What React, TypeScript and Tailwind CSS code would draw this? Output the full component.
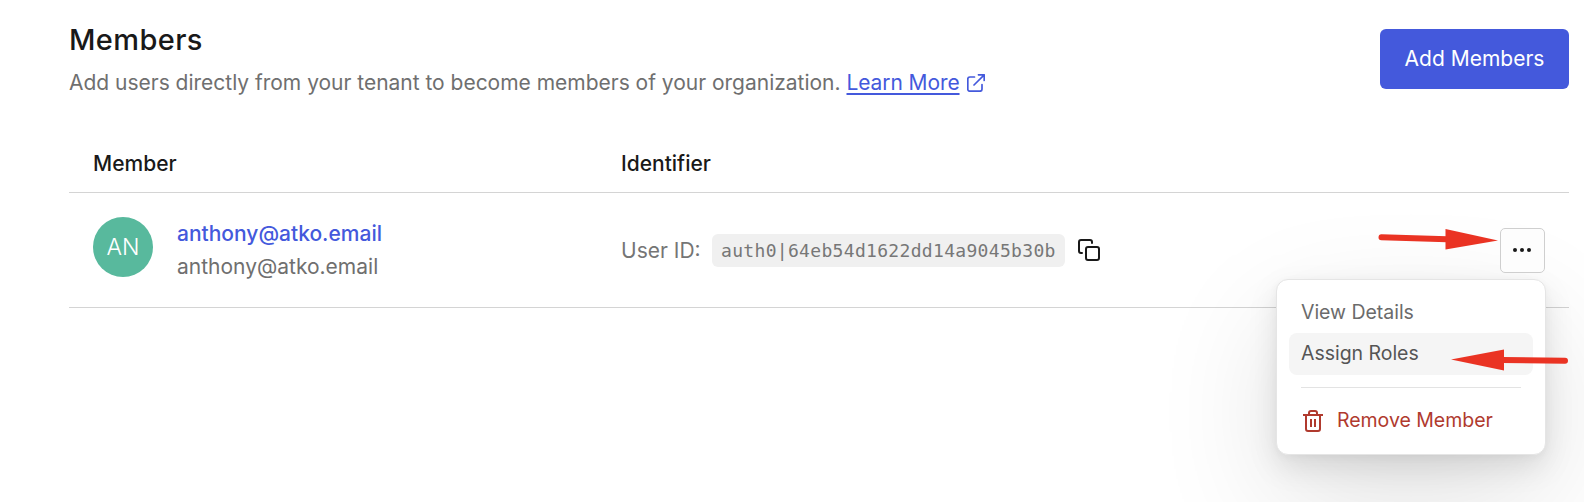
import React from "react";

function ExternalIcon() {
  return (
    <svg className="ml-[7px] h-[18px] w-[18px] text-[#4459dc]" viewBox="0 0 18 18" fill="none" stroke="currentColor" strokeWidth="1.7" strokeLinecap="round" strokeLinejoin="round">
      <path d="M7.5 3H2.8A2 2 0 0 0 .8 5V15.200A2 2 0 0 0 2.8 17.200H13A2 2 0 0 0 15 15.200V10.500M11.500 .8H17.200V6.500M17.200 .8L7 11" />
    </svg>
  );
}

function CopyIcon() {
  return (
    <svg className="ml-[13px] h-[22px] w-[22px] text-[#191919]" viewBox="0 0 22 22" fill="none" stroke="currentColor" strokeWidth="2" strokeLinecap="round">
      <rect x="8" y="8" width="13" height="13" rx="2" />
      <path d="M4 14H3A2 2 0 0 1 1 12V3A2 2 0 0 1 3 1H12A2 2 0 0 1 14 3V4" />
    </svg>
  );
}

function TrashIcon() {
  return (
    <svg className="ml-0.5 h-[22px] w-5" viewBox="0 0 20 22" fill="none" stroke="currentColor" strokeWidth="2" strokeLinejoin="round">
      <path d="M0 5H20M6 5V3A2 2 0 0 1 8 1H12A2 2 0 0 1 14 3V5M3 5V19A2 2 0 0 0 5 21H15A2 2 0 0 0 17 19V5M8 9V17M12 9V17" />
    </svg>
  );
}

function ActionsMenu() {
  return (
    <div className="absolute top-[51px] -right-px h-[176px] w-[270px] rounded-[12px] border border-[#e5e5e5] bg-white px-3 pt-[11px] text-[19.5px] tracking-[-0.03px] shadow-[0_45px_125px_rgba(0,0,0,0.12),0_12px_30px_rgba(0,0,0,0.1),0_2px_8px_rgba(0,0,0,0.04)]">
      <div className="flex h-[42px] items-center px-3 pt-0.5 text-[#6b6b6b]">View Details</div>
      <div className="flex h-[42px] items-center rounded-lg bg-[#f5f5f5] px-3 text-[#555555]">Assign Roles</div>
      <div className="mx-3 mt-3 h-px bg-[#e3e3e3]" />
      <div className="mt-3 flex h-[42px] items-center px-3 text-[#b03a2e]">
        <TrashIcon />
        <span className="ml-[14px] pt-px">Remove Member</span>
      </div>
    </div>
  );
}

function Arrows() {
  return (
    <svg className="pointer-events-none absolute top-[220px] left-[1370px] h-[160px] w-[210px] fill-[#ea3323] stroke-[#ea3323]" viewBox="1370 220 210 160">
      <path d="M1381.500 237.300L1447 239.300" strokeWidth="6" strokeLinecap="round" />
      <path d="M1445.500 229L1498 240.500L1445.500 249.500Z" stroke="none" />
      <path d="M1565 360.700L1502 360" strokeWidth="6" strokeLinecap="round" />
      <path d="M1504 349.500L1451 359.500L1504 370.500Z" stroke="none" />
    </svg>
  );
}

export default function App() {
  return (
    <main className="relative h-[502px] w-[1584px] overflow-hidden bg-white pr-[15px] pl-[69px] font-['Inter',sans-serif]">
      <header className="flex h-[142px] items-start justify-between pt-[24px]">
        <div>
          <h1 className="text-[29px] leading-[32px] font-medium tracking-[0.4px] text-[#191919]">Members</h1>
          <p className="mt-3 flex items-center text-[21px] leading-[30px] tracking-[-0.015px] text-[#6f6f6f]">
            <span>Add users directly from your tenant to become members of your organization.</span>
            <a className="ml-[6px] tracking-[-0.1px] text-[#4459dc] underline decoration-2 underline-offset-[3px]">Learn More</a>
            <ExternalIcon />
          </p>
        </div>
        <button className="mt-[5px] h-[60px] w-[189px] rounded-[6px] bg-[#4459dc] text-[21px] text-white">Add Members</button>
      </header>
      <section className="text-[21px]">
        <div className="flex h-[51px] items-center border-b border-[#d4d4d4] pb-[7px] font-medium text-[#191919]">
          <div className="w-[552px] pl-6">Member</div>
          <div>Identifier</div>
        </div>
        <div className="flex h-[115px] items-center border-b border-[#d4d4d4] pr-6">
          <div className="flex w-[552px] pl-6">
            <div className="flex h-[60px] w-[60px] items-center justify-center rounded-full bg-[#58b99d] text-[23px] font-light text-white">AN</div>
            <div className="ml-6 leading-[33px]">
              <div className="font-medium text-[#4459dc]">anthony@atko.email</div>
              <div className="text-[#6f6f6f]">anthony@atko.email</div>
            </div>
          </div>
          <div className="flex flex-1 items-center text-[#757575]">
            <span className="w-[91px] pt-px">User ID:</span>
            <code className="flex h-[33px] w-[353px] items-center rounded-[6px] bg-[#f0f0f0] pl-[9px] font-['DejaVu_Sans_Mono',monospace] text-[18px] tracking-[0.32px] text-[#777777]">auth0|64eb54d1622dd14a9045b30b</code>
            <CopyIcon />
          </div>
          <div className="relative">
            <ActionsMenu />
            <button aria-label="Actions" className="relative flex h-[45px] w-[45px] items-center justify-center gap-[3px] rounded-[5px] border border-[#cfcfcf] bg-[#fdfdfd] pr-0.5">
              <span className="h-1 w-1 rounded-full bg-[#191919]" />
              <span className="h-1 w-1 rounded-full bg-[#191919]" />
              <span className="h-1 w-1 rounded-full bg-[#191919]" />
            </button>
          </div>
        </div>
      </section>
      <Arrows />
    </main>
  );
}
